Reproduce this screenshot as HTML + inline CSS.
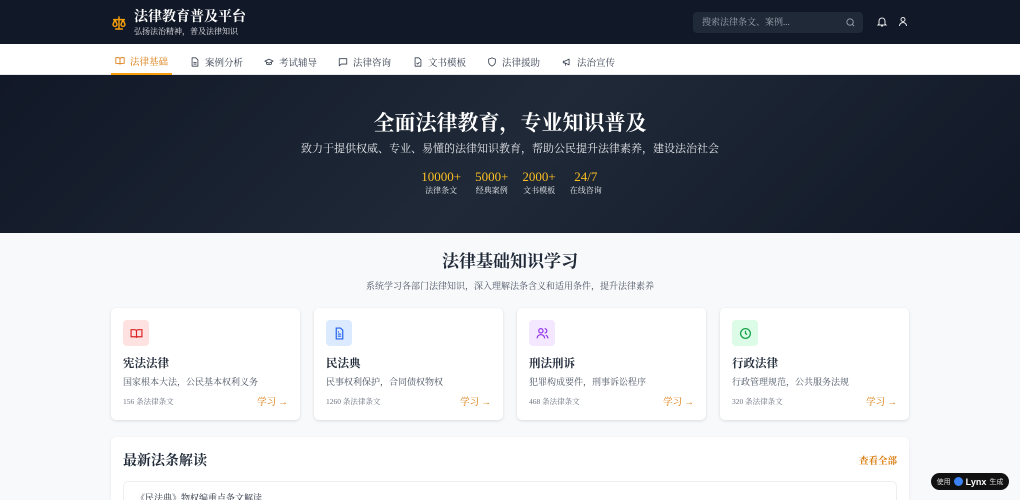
<!DOCTYPE html>
<html><head><meta charset="utf-8"><style>
*{margin:0;padding:0;box-sizing:border-box}
html,body{width:1020px;height:500px;overflow:hidden}
body{background:#f8f9fb;font-family:"Liberation Serif","Noto Serif CJK SC",serif;color:#1f2937;position:relative}
.hdr{height:44px;background:#111827;position:relative}
.logo{position:absolute;left:111px;top:9px;display:flex;align-items:center}
.t1{color:#fff;font-size:14px;font-weight:bold;line-height:17px}
.t2{color:#e5e7eb;font-size:8px;line-height:11px}
.search{position:absolute;left:693px;top:12px;width:170px;height:21px;background:#1f2937;border-radius:4px;color:#9ca3af;font-size:9px;line-height:21px;padding-left:9px}
.nav{height:31px;background:#fff;position:relative;border-bottom:1px solid #e5e7eb}
.nav div{position:absolute;top:0;height:31px;padding-top:4px;font-size:9.5px;color:#374151;display:flex;align-items:center;gap:5px}
.nav div.on{color:#d97706;border-bottom:2px solid #f59e0b;padding:4px 4px 0}
.nav svg{width:10px;height:10px;fill:none;stroke:currentColor;stroke-width:2;stroke-linecap:round;stroke-linejoin:round}
.hero{height:158px;background:linear-gradient(135deg,#111827,#1f2937 50%,#111827);text-align:center;color:#fff}
.hero h1{font-size:21px;padding-top:35px;line-height:26px}
.hero p{font-size:11px;color:#e5e7eb;margin-top:4px}
.stats{display:flex;justify-content:center;gap:14px;margin-top:13px;margin-left:3px}
.stats div{text-align:center}
.stats b{display:block;color:#fbbf24;font-size:13px;font-weight:normal;line-height:16px}
.stats span{font-size:8px;color:#e5e7eb;line-height:11px;display:block}
.sec{text-align:center}
.sec h2{font-size:17px;margin-top:18px;line-height:22px}
.sec p{font-size:9px;color:#4b5563;margin-top:6px}
.cards{position:absolute;top:308px;left:111px;display:flex;gap:14px}
.card{width:189px;height:112px;background:#fff;border-radius:5px;box-shadow:0 1px 3px rgba(0,0,0,.12);padding:12px 12px;position:relative}
.ic{width:26px;height:26px;border-radius:4px;display:flex;align-items:center;justify-content:center}
.card h3{font-size:11.5px;margin-top:10px;line-height:16px}
.card .d{font-size:9px;color:#4b5563;margin-top:3px}
.card .n{position:absolute;left:12px;bottom:13px;font-size:7.5px;color:#6b7280}
.card .l{position:absolute;right:12px;bottom:12px;font-size:9.5px;color:#d97706}
.latest{position:absolute;left:111px;top:437px;width:798px;height:80px;background:#fff;border-radius:5px;box-shadow:0 1px 3px rgba(0,0,0,.08)}
.latest h2{position:absolute;left:12px;top:13px;font-size:14px}
.latest .all{position:absolute;right:12px;top:16px;font-size:9.5px;color:#d97706;font-weight:bold}
.item{position:absolute;left:12px;top:44px;width:774px;height:40px;border:1px solid #eceef1;border-radius:5px;font-size:9px;padding:9px 12px}
.item span{position:absolute;right:10px;top:16px;color:#d97706}
.lynx{position:absolute;left:931px;top:473px;width:78px;height:17px;background:#111;border-radius:9px;color:#ddd;font-size:7px;display:flex;align-items:center;justify-content:center;gap:3px;font-family:"Liberation Sans","Noto Sans CJK SC",sans-serif}
</style></head><body>
<div class="hdr">
 <div class="logo">
  <svg width="16" height="16" viewBox="0 0 24 24" fill="none" stroke="#f59e0b" stroke-width="2.2" stroke-linecap="round" stroke-linejoin="round"><path d="M12 3v18M7 21h10M4 7h16M6 7l-3 7a3 3 0 006 0zM18 7l-3 7a3 3 0 006 0z"/></svg>
  <div style="margin-left:7px"><div class="t1">法律教育普及平台</div><div class="t2">弘扬法治精神，普及法律知识</div></div>
 </div>
 <div class="search">搜索法律条文、案例...
  <svg style="position:absolute;right:7px;top:5px" width="11" height="11" viewBox="0 0 24 24" fill="none" stroke="#9ca3af" stroke-width="2"><circle cx="11" cy="11" r="7"/><path d="M20 20l-4-4"/></svg></div>
 <svg style="position:absolute;left:876px;top:15px" width="12" height="13" viewBox="0 0 24 24" fill="none" stroke="#e5e7eb" stroke-width="2"><path d="M6 17V11a6 6 0 0112 0v6l2 2H4zM10 21h4"/></svg>
 <svg style="position:absolute;left:897px;top:15px" width="12" height="13" viewBox="0 0 24 24" fill="none" stroke="#e5e7eb" stroke-width="2"><circle cx="12" cy="8" r="4"/><path d="M5 21a7 7 0 0114 0"/></svg>
</div>
<div class="nav">
 <div class="on" style="left:111px"><svg viewBox="0 0 24 24"><path d="M2 4h7a3 3 0 013 3v13a2 2 0 00-2-2H2zM22 4h-7a3 3 0 00-3 3v13a2 2 0 012-2h8z"/></svg>法律基础</div>
 <div style="left:190px"><svg viewBox="0 0 24 24"><path d="M14 2H5v20h14V7zM9 13h6M9 17h6"/></svg>案例分析</div>
 <div style="left:264px"><svg viewBox="0 0 24 24"><path d="M2 10l10-5 10 5-10 5zM6 12v5c3 2 9 2 12 0v-5"/></svg>考试辅导</div>
 <div style="left:338px"><svg viewBox="0 0 24 24"><path d="M3 4h18v13H8l-5 4z"/></svg>法律咨询</div>
 <div style="left:413px"><svg viewBox="0 0 24 24"><path d="M14 2H5v20h14V7zM9 15l2 2 4-4"/></svg>文书模板</div>
 <div style="left:487px"><svg viewBox="0 0 24 24"><path d="M12 2l8 3v7c0 5-4 8-8 10-4-2-8-5-8-10V5z"/></svg>法律援助</div>
 <div style="left:562px"><svg viewBox="0 0 24 24"><path d="M3 10v4h4l10 5V5L7 10zM7 14l2 6"/></svg>法治宣传</div>
</div>
<div class="hero">
 <h1>全面法律教育，专业知识普及</h1>
 <p>致力于提供权威、专业、易懂的法律知识教育，帮助公民提升法律素养，建设法治社会</p>
 <div class="stats"><div><b>10000+</b><span>法律条文</span></div><div><b>5000+</b><span>经典案例</span></div><div><b>2000+</b><span>文书模板</span></div><div><b>24/7</b><span>在线咨询</span></div></div>
</div>
<div class="sec"><h2>法律基础知识学习</h2><p>系统学习各部门法律知识，深入理解法条含义和适用条件，提升法律素养</p></div>
<div class="cards">
 <div class="card"><div class="ic" style="background:#fee2e2"><svg width="13" height="13" viewBox="0 0 24 24" fill="none" stroke="#dc2626" stroke-width="2.2"><path d="M2 5h7a3 3 0 013 3v12a2 2 0 00-2-2H2zM22 5h-7a3 3 0 00-3 3v12a2 2 0 012-2h8z"/></svg></div><h3>宪法法律</h3><div class="d">国家根本大法，公民基本权利义务</div><div class="n">156 条法律条文</div><div class="l">学习 →</div></div>
 <div class="card"><div class="ic" style="background:#dbeafe"><svg width="13" height="13" viewBox="0 0 24 24" fill="none" stroke="#2563eb" stroke-width="2.2"><path d="M14 2H6v20h12V6zM9 13h6M9 17h6M9 9h2"/></svg></div><h3>民法典</h3><div class="d">民事权利保护，合同债权物权</div><div class="n">1260 条法律条文</div><div class="l">学习 →</div></div>
 <div class="card"><div class="ic" style="background:#f3e8ff"><svg width="13" height="13" viewBox="0 0 24 24" fill="none" stroke="#9333ea" stroke-width="2.2"><circle cx="9" cy="7" r="4"/><path d="M2 21a7 7 0 0114 0M16 3a4 4 0 010 8M22 21a7 7 0 00-4-6"/></svg></div><h3>刑法刑诉</h3><div class="d">犯罪构成要件，刑事诉讼程序</div><div class="n">468 条法律条文</div><div class="l">学习 →</div></div>
 <div class="card"><div class="ic" style="background:#dcfce7"><svg width="13" height="13" viewBox="0 0 24 24" fill="none" stroke="#16a34a" stroke-width="2.4"><circle cx="12" cy="12" r="9"/><path d="M12 7v5l3 2"/></svg></div><h3>行政法律</h3><div class="d">行政管理规范，公共服务法规</div><div class="n">320 条法律条文</div><div class="l">学习 →</div></div>
</div>
<div class="latest"><h2>最新法条解读</h2><div class="all">查看全部</div><div class="item">《民法典》物权编重点条文解读<span>阅读</span></div></div>
<div class="lynx">使用 <span style="display:inline-block;width:9px;height:9px;border-radius:50%;background:#3b82f6"></span><b style="color:#fff;font-size:9px">Lynx</b> 生成</div>
</body></html>
